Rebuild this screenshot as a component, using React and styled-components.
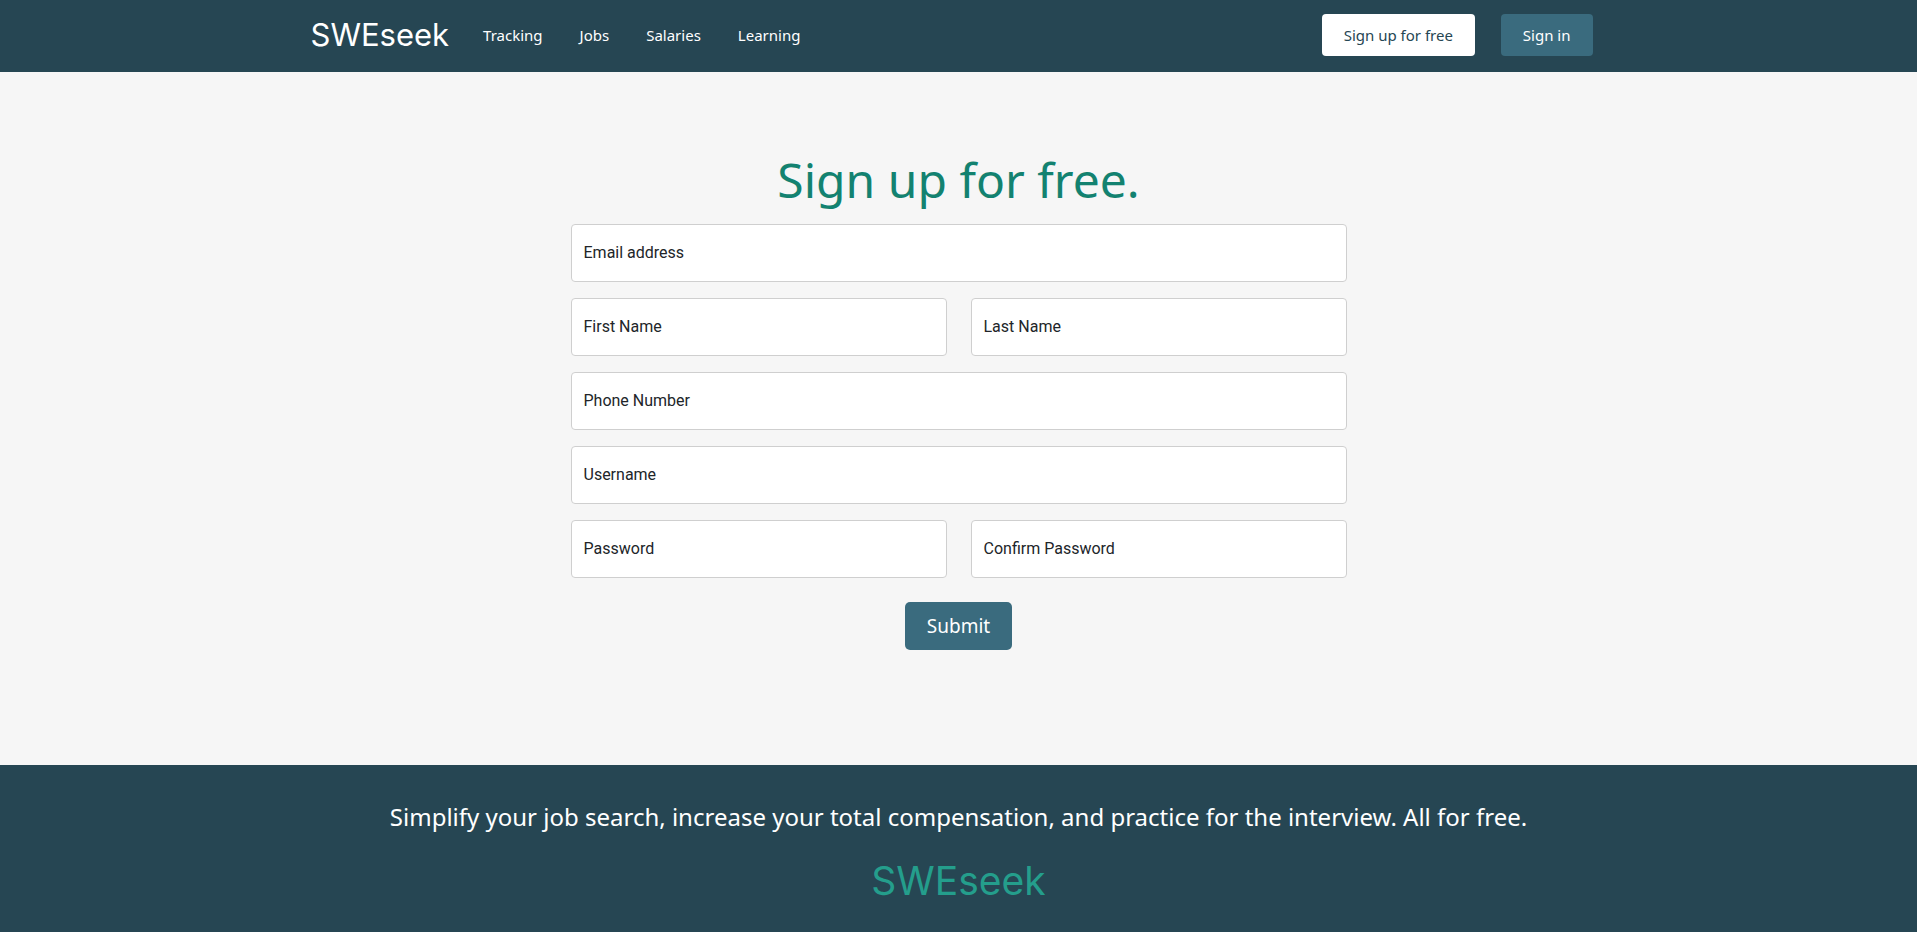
import React from "react";
import styled, { createGlobalStyle, css } from "styled-components";

const GlobalStyle = createGlobalStyle`
  *, *::before, *::after { box-sizing: border-box; }
  body {
    margin: 0;
    background: #f6f6f6;
    color: #212529;
    font-family: "Noto Sans", "Open Sans", sans-serif;
    font-size: 16px;
    line-height: 24px;
  }
`;

const Page = styled.div`
  display: flex;
  flex-direction: column;
  min-height: 100vh;
`;

const Header = styled.header`
  background: #264653;
`;

const HeaderInner = styled.div`
  display: flex;
  align-items: center;
  width: 100%;
  max-width: 1320px;
  margin: 0 auto;
  padding: 14px 26px 16px 12px;
`;

const logoType = css`
  font-family: Inter, sans-serif;
  font-weight: 400;
  text-decoration: none;
`;

const Brand = styled.a`
  ${logoType}
  color: #fff;
  font-size: 31px;
  line-height: 40px;
`;

const Nav = styled.nav`
  display: flex;
  flex: 1;
  gap: 37px;
  margin-left: 34px;
`;

const NavLink = styled.a`
  color: #fff;
  font-size: 15px;
  text-decoration: none;
`;

const Actions = styled.div`
  display: flex;
  gap: 26px;
`;

const Button = styled.button`
  border: 0;
  border-radius: ${(p) => (p.$large ? 5 : 4)}px;
  padding: 9px 22px;
  background: ${(p) => (p.$light ? "#fff" : "#3a6b7e")};
  color: ${(p) => (p.$light ? "#264653" : "#fff")};
  font-family: inherit;
  font-size: ${(p) => (p.$large ? 19 : 15)}px;
  line-height: ${(p) => (p.$large ? 30 : 24)}px;
  cursor: pointer;
`;

const Main = styled.main`
  flex: 1;
  width: 100%;
  max-width: 800px;
  margin: 0 auto;
  padding: 78px 12px 114px;
`;

const Title = styled.h1`
  margin: 0 0 14px;
  color: #138270;
  font-size: 48px;
  font-weight: 400;
  line-height: 60px;
  text-align: center;
`;

const Form = styled.form`
  display: grid;
  grid-template-columns: 1fr 1fr;
  gap: 16px 24px;
`;

const Field = styled.div`
  display: grid;
  grid-column: ${(p) => (p.$half ? "auto" : "1 / -1")};
  font-family: Roboto, sans-serif;

  & > * { grid-area: 1 / 1; }
`;

const Label = styled.label`
  align-self: center;
  padding: 0 13px;
  pointer-events: none;
  z-index: 1;
`;

const Input = styled.input`
  width: 100%;
  height: 58px;
  padding: 16px 12px;
  border: 1px solid #cfcfcf;
  border-radius: 4px;
  background: #fff;
  color: inherit;
  font: inherit;

  &:focus + label,
  &:not(:placeholder-shown) + label {
    align-self: start;
    font-size: 12px;
  }
`;

const SubmitRow = styled.div`
  grid-column: 1 / -1;
  display: flex;
  justify-content: center;
  padding-top: 8px;
`;

const Footer = styled.footer`
  display: flex;
  flex-direction: column;
  align-items: center;
  gap: 20px;
  padding: 32px 12px 27px;
  background: #264653;
  text-align: center;
`;

const Tagline = styled.p`
  margin: 0;
  color: #fff;
  font-size: 24px;
  line-height: 40px;
`;

const FooterBrand = styled.a`
  ${logoType}
  color: #249e8c;
  font-size: 39px;
  line-height: 48px;
`;

const links = ["Tracking", "Jobs", "Salaries", "Learning"];

const fields = [
  { id: "email", label: "Email address", type: "email" },
  { id: "firstName", label: "First Name", half: true },
  { id: "lastName", label: "Last Name", half: true },
  { id: "phone", label: "Phone Number", type: "tel" },
  { id: "username", label: "Username" },
  { id: "password", label: "Password", type: "password", half: true },
  { id: "confirm", label: "Confirm Password", type: "password", half: true },
];

export default function App() {
  return (
    <Page>
      <GlobalStyle />
      <Header>
        <HeaderInner>
          <Brand href="#">SWEseek</Brand>
          <Nav>
            {links.map((name) => (
              <NavLink key={name} href={`#${name.toLowerCase()}`}>{name}</NavLink>
            ))}
          </Nav>
          <Actions>
            <Button type="button" $light>Sign up for free</Button>
            <Button type="button">Sign in</Button>
          </Actions>
        </HeaderInner>
      </Header>
      <Main>
        <Title>Sign up for free.</Title>
        <Form onSubmit={(e) => e.preventDefault()}>
          {fields.map(({ id, label, type = "text", half }) => (
            <Field key={id} $half={half}>
              <Input id={id} name={id} type={type} placeholder=" " />
              <Label htmlFor={id}>{label}</Label>
            </Field>
          ))}
          <SubmitRow>
            <Button type="submit" $large>Submit</Button>
          </SubmitRow>
        </Form>
      </Main>
      <Footer>
        <Tagline>
          Simplify your job search, increase your total compensation, and practice for the interview. All for free.
        </Tagline>
        <FooterBrand href="#">SWEseek</FooterBrand>
      </Footer>
    </Page>
  );
}
